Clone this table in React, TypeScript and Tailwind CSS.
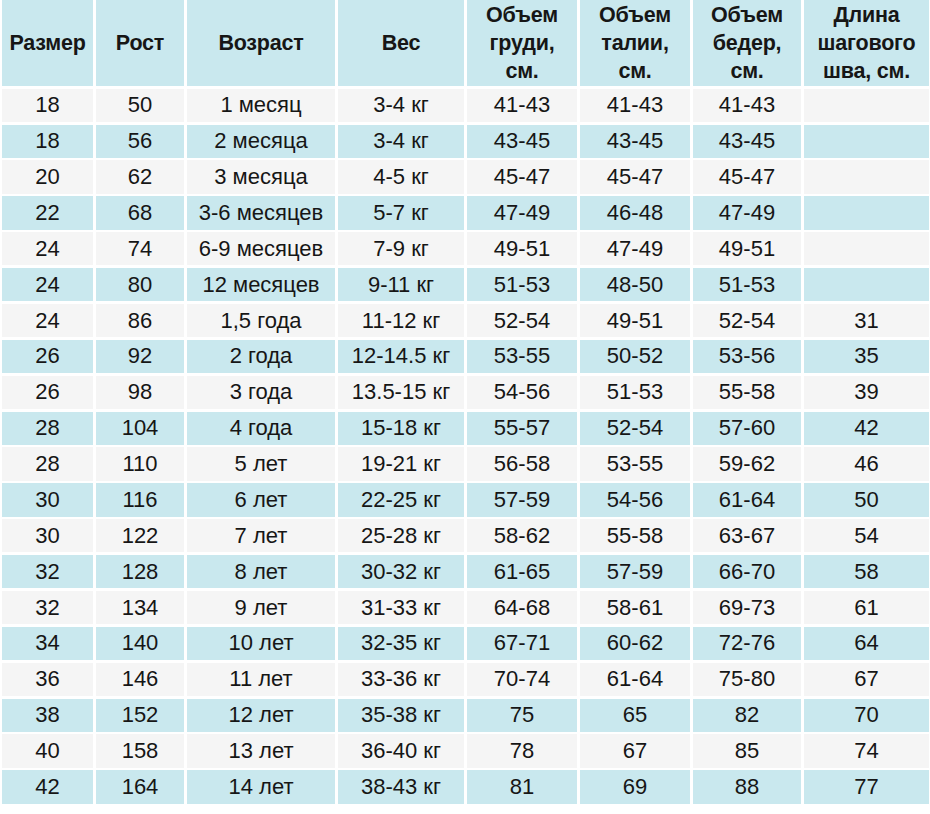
import React from "react";

// Таблица размеров детской одежды
const HEADERS: string[][] = [
  ["Размер"],
  ["Рост"],
  ["Возраст"],
  ["Вес"],
  ["Объем", "груди,", "см."],
  ["Объем", "талии,", "см."],
  ["Объем", "бедер,", "см."],
  ["Длина", "шагового", "шва, см."],
];

const ROWS: string[][] = [
  ["18", "50", "1 месяц", "3-4 кг", "41-43", "41-43", "41-43", ""],
  ["18", "56", "2 месяца", "3-4 кг", "43-45", "43-45", "43-45", ""],
  ["20", "62", "3 месяца", "4-5 кг", "45-47", "45-47", "45-47", ""],
  ["22", "68", "3-6 месяцев", "5-7 кг", "47-49", "46-48", "47-49", ""],
  ["24", "74", "6-9 месяцев", "7-9 кг", "49-51", "47-49", "49-51", ""],
  ["24", "80", "12 месяцев", "9-11 кг", "51-53", "48-50", "51-53", ""],
  ["24", "86", "1,5 года", "11-12 кг", "52-54", "49-51", "52-54", "31"],
  ["26", "92", "2 года", "12-14.5 кг", "53-55", "50-52", "53-56", "35"],
  ["26", "98", "3 года", "13.5-15 кг", "54-56", "51-53", "55-58", "39"],
  ["28", "104", "4 года", "15-18 кг", "55-57", "52-54", "57-60", "42"],
  ["28", "110", "5 лет", "19-21 кг", "56-58", "53-55", "59-62", "46"],
  ["30", "116", "6 лет", "22-25 кг", "57-59", "54-56", "61-64", "50"],
  ["30", "122", "7 лет", "25-28 кг", "58-62", "55-58", "63-67", "54"],
  ["32", "128", "8 лет", "30-32 кг", "61-65", "57-59", "66-70", "58"],
  ["32", "134", "9 лет", "31-33 кг", "64-68", "58-61", "69-73", "61"],
  ["34", "140", "10 лет", "32-35 кг", "67-71", "60-62", "72-76", "64"],
  ["36", "146", "11 лет", "33-36 кг", "70-74", "61-64", "75-80", "67"],
  ["38", "152", "12 лет", "35-38 кг", "75", "65", "82", "70"],
  ["40", "158", "13 лет", "36-40 кг", "78", "67", "85", "74"],
  ["42", "164", "14 лет", "38-43 кг", "81", "69", "88", "77"],
];

export default function App() {
  return (
    <div
      className="w-[930px] h-[814px] bg-white overflow-hidden text-[#161616]"
      style={{ fontFamily: '"Liberation Sans", Arial, sans-serif' }}
    >
      <div className="grid grid-cols-[91px_88px_148px_126px_110px_110px_108px_125px] gap-x-[3px] gap-y-[2.7px] pl-[2px]">
        {HEADERS.map((lines, i) => (
          <div
            key={"h" + i}
            className="h-[86px] bg-[#c9e8ee] flex flex-col items-center justify-center text-[21.5px] font-bold leading-[28px] tracking-[-0.2px]"
          >
            {lines.map((l) => (
              <span key={l}>{l}</span>
            ))}
          </div>
        ))}
        {ROWS.map((row, r) =>
          row.map((cell, c) => (
            <div
              key={r + "-" + c}
              className={
                "h-[33.2px] flex items-center justify-center text-[22px] leading-none " +
                (r % 2 === 0 ? "bg-[#f5f5f5]" : "bg-[#c9e8ee]")
              }
            >
              {cell}
            </div>
          ))
        )}
      </div>
    </div>
  );
}
